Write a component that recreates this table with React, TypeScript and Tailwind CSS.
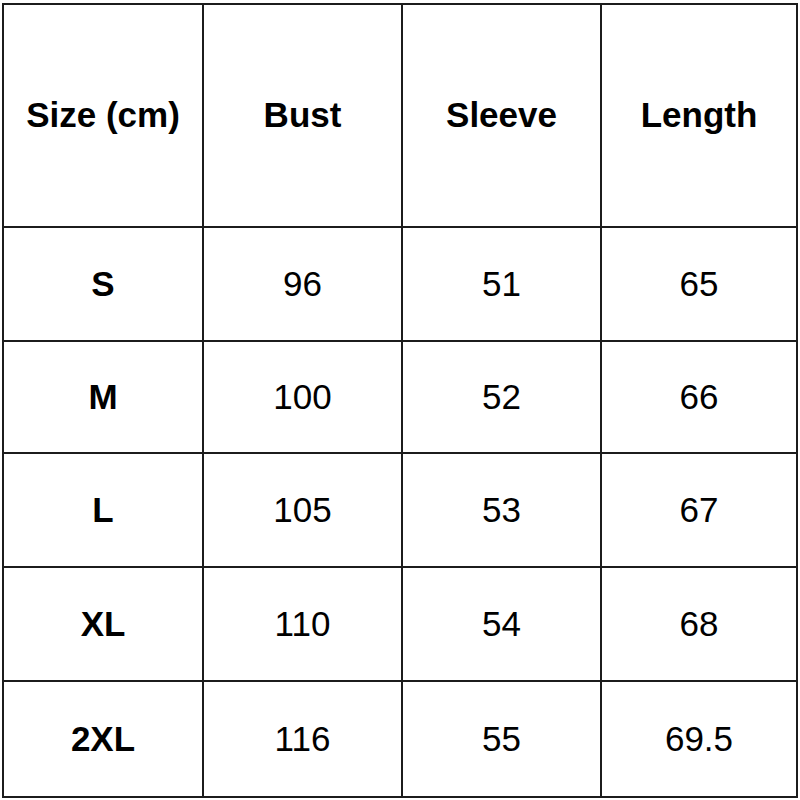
const headers = ['Size (cm)', 'Bust', 'Sleeve', 'Length']

const rows = [
  ['S', '96', '51', '65'],
  ['M', '100', '52', '66'],
  ['L', '105', '53', '67'],
  ['XL', '110', '54', '68'],
  ['2XL', '116', '55', '69.5'],
]

export default function App() {
  return (
    <div className="w-[800px] h-[800px] bg-white pt-[3px] pl-[2px]">
      <div
        className="grid grid-cols-[198px_197px_197px_194px] grid-rows-[221px_112px_110px_112px_112px_114px] gap-[2px] p-[2px] bg-[#1c1c1c] w-fit text-black text-[35px]"
        style={{ fontFamily: '"Liberation Sans", Arial, sans-serif' }}
      >
        {headers.map((h) => (
          <div key={h} className="bg-white flex items-center justify-center font-bold">
            {h}
          </div>
        ))}
        {rows.map((row) =>
          row.map((cell, i) => (
            <div
              key={row[0] + i}
              className={`bg-white flex items-center justify-center ${i === 0 ? 'font-bold' : ''}`}
            >
              {cell}
            </div>
          ))
        )}
      </div>
    </div>
  )
}
